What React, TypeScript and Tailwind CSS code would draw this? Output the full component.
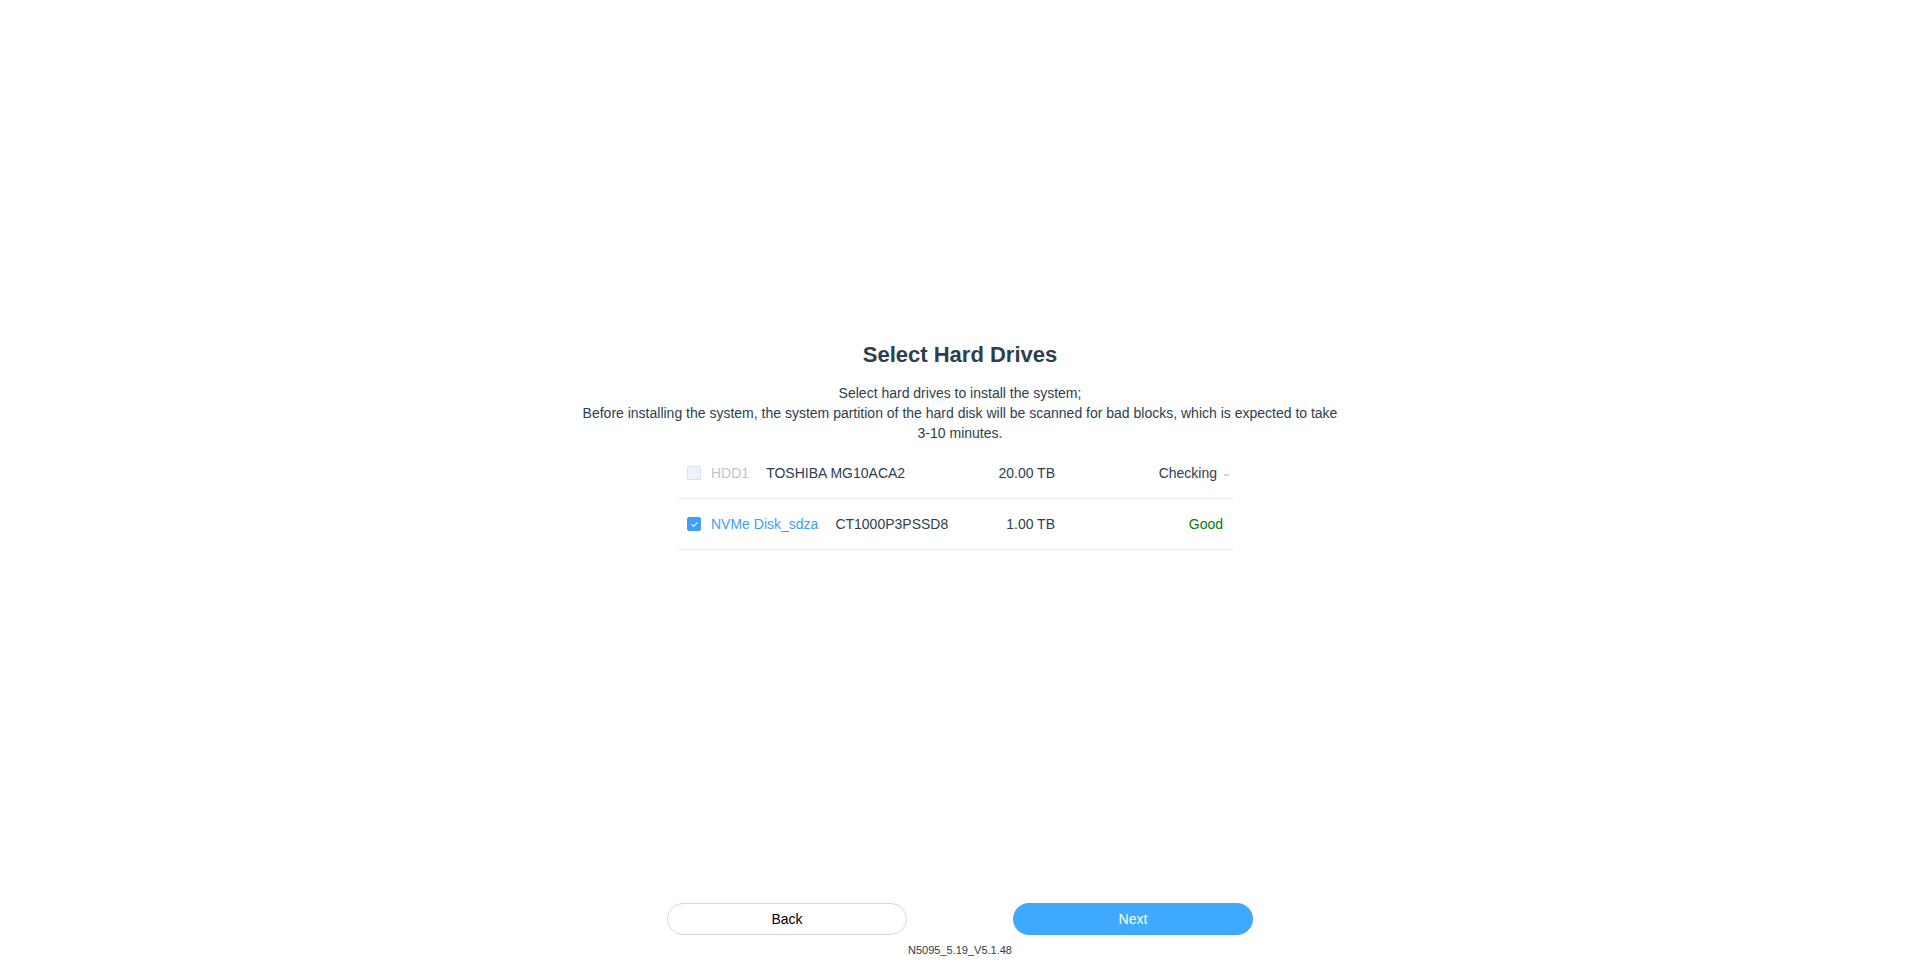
import { useState } from 'react';

type Drive = {
  id: string;
  name: string;
  model: string;
  size: string;
  status: 'checking' | 'good';
  disabled: boolean;
};

const drives: Drive[] = [
  { id: 'hdd1', name: 'HDD1', model: 'TOSHIBA MG10ACA2', size: '20.00 TB', status: 'checking', disabled: true },
  { id: 'sdza', name: 'NVMe Disk_sdza', model: 'CT1000P3PSSD8', size: '1.00 TB', status: 'good', disabled: false },
];

function Checkbox({ checked, disabled }: { checked: boolean; disabled: boolean }) {
  if (checked) {
    return (
      <span className="flex h-[14px] w-[14px] shrink-0 items-center justify-center rounded-[2px] border border-[#409eff] bg-[#409eff]">
        <svg viewBox="0 0 10 10" className="h-[9px] w-[9px]" fill="none">
          <path d="M2 5.2 4.1 7.2 8 3" stroke="#fff" strokeWidth="1.2" strokeLinecap="round" strokeLinejoin="round" />
        </svg>
      </span>
    );
  }
  return (
    <span
      className={`block h-[14px] w-[14px] shrink-0 rounded-[2px] border ${
        disabled ? 'border-[#dcdfe6] bg-[#edf2fc]' : 'border-[#dcdfe6] bg-white'
      }`}
    />
  );
}

export default function App() {
  const [selected] = useState<string[]>(['sdza']);

  return (
    <div className="flex h-[965px] w-full flex-col bg-white font-['Liberation_Sans',Arial,sans-serif] text-[#2c3e50]">
      {/* ===== CONTENT ===== */}
      <div className="flex flex-1 flex-col items-center justify-center">
        <h1 className="text-[22px] font-bold leading-[30px] text-[#2c3e50]">Select Hard Drives</h1>
        <p className="mt-[13px] max-w-[780px] text-center text-[14px] leading-[20px] text-[#2c3e50]">
          Select hard drives to install the system;
          <br />
          Before installing the system, the system partition of the hard disk will be scanned for bad blocks, which is
          expected to take <span className="whitespace-nowrap">3-10 minutes.</span>
        </p>

        <div className="mr-[9px] mt-[5px] w-[557px]">
          {drives.map((d) => {
            const isChecked = selected.includes(d.id);
            return (
              <div
                key={d.id}
                className="flex h-[51px] items-center border-b border-[#ebeef5] pl-[10px] text-[14px] leading-[20px]"
              >
                <Checkbox checked={isChecked} disabled={d.disabled} />
                <span
                  className={`ml-[10px] ${
                    d.disabled ? 'text-[#c0c4cc]' : isChecked ? 'text-[#409eff]' : 'text-[#2c3e50]'
                  }`}
                >
                  {d.name}
                </span>
                <span className="ml-[17px] flex-1">{d.model}</span>
                <span className="text-right">{d.size}</span>
                <span className="w-[179px] pr-[11px] text-right">
                  {d.status === 'checking' ? (
                    <>
                      Checking
                      <span className="ml-[7px] mr-[-6px] mb-[2px] inline-block h-[2px] w-[5px] bg-[#cfd3da] align-baseline" />
                    </>
                  ) : (
                    <span className="text-[#008000]">Good</span>
                  )}
                </span>
              </div>
            );
          })}
        </div>
      </div>

      {/* ===== FOOTER ===== */}
      <div className="flex h-[75px] flex-col items-center pt-[13px]">
        <div className="flex gap-[106px]">
          <button className="h-[32px] w-[240px] rounded-full border border-[#d5d7db] bg-white text-[14px] text-black">
            Back
          </button>
          <button className="h-[32px] w-[240px] rounded-full bg-[#3ea9fd] text-[14px] text-white">Next</button>
        </div>
        <div className="mt-[9px] text-[11px] leading-[13px] text-[#2c3e50]">N5095_5.19_V5.1.48</div>
      </div>
    </div>
  );
}
